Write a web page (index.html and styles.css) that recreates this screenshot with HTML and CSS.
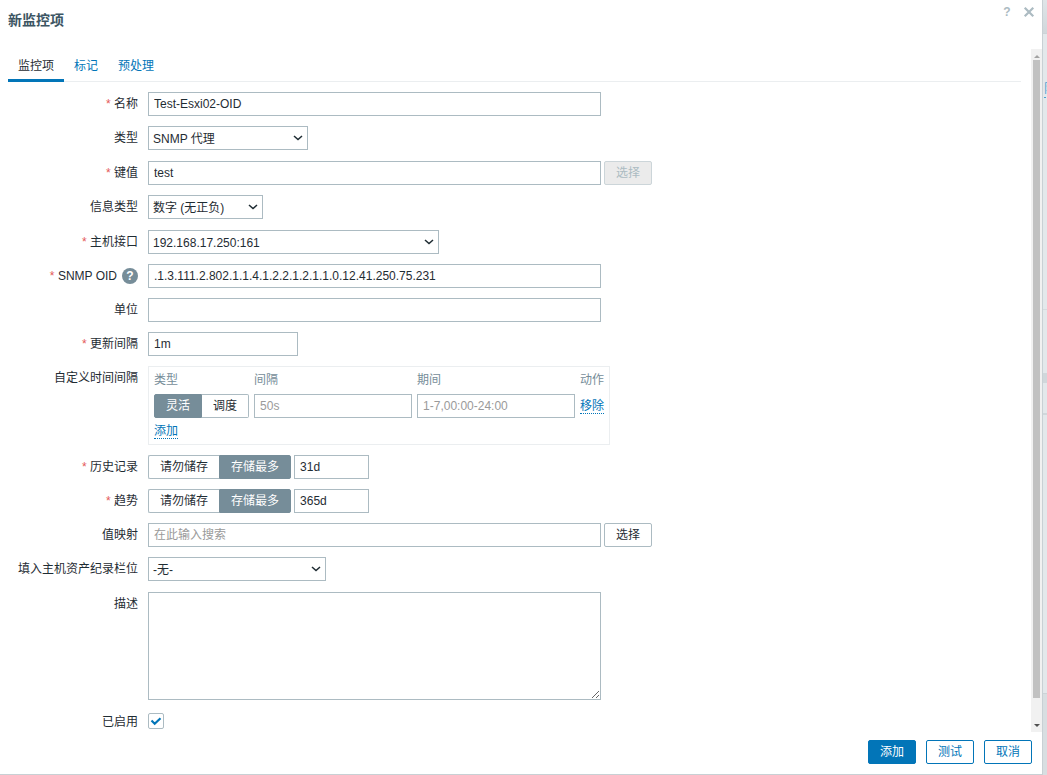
FILE: index.html
```html
<!DOCTYPE html>
<html lang="zh-CN">
<head>
<meta charset="utf-8">
<title>新监控项</title>
<link rel="stylesheet" href="styles.css">
</head>
<body>
<div class="page">
  <main class="dialog" role="dialog" aria-labelledby="dialog-title">
    <header class="dialog-header">
      <h1 class="dialog-title" id="dialog-title">新监控项</h1>
      <div class="dialog-tools">
        <button class="tool" type="button" aria-label="帮助">?</button>
        <button class="tool" type="button" aria-label="关闭"><svg width="12" height="12" viewBox="0 0 12 12"><path d="M2.5 2.5l7 7M9.5 2.5l-7 7" stroke="currentColor" stroke-width="2.2" stroke-linecap="square"/></svg></button>
      </div>
    </header>

    <div class="dialog-body">
      <div class="content">
        <nav class="tabs">
          <button class="tab tab-active" type="button">监控项</button>
          <button class="tab" type="button">标记</button>
          <button class="tab" type="button">预处理</button>
        </nav>
        <form class="form" id="item-form">
          <label class="label required" for="name">名称</label>
          <div class="field"><input class="input wide" id="name" type="text" value="Test-Esxi02-OID"></div>

          <label class="label" for="type">类型</label>
          <div class="field field-tall"><span class="select select-type"><select id="type"><option>SNMP 代理</option></select><svg class="chevron" viewBox="0 0 10 6"><path d="M1 1l4 3.6L9 1"/></svg></span></div>

          <label class="label required" for="key">键值</label>
          <div class="field"><input class="input wide" id="key" type="text" value="test"><button class="button button-plain" type="button" disabled>选择</button></div>

          <label class="label" for="value-type">信息类型</label>
          <div class="field field-tall"><span class="select select-value"><select id="value-type"><option>数字 (无正负)</option></select><svg class="chevron" viewBox="0 0 10 6"><path d="M1 1l4 3.6L9 1"/></svg></span></div>

          <label class="label required" for="interface">主机接口</label>
          <div class="field"><span class="select select-interface"><select id="interface"><option>192.168.17.250:161</option></select><svg class="chevron" viewBox="0 0 10 6"><path d="M1 1l4 3.6L9 1"/></svg></span></div>

          <div class="label label-help"><label class="required" for="oid">SNMP OID</label><button class="help" type="button">?</button></div>
          <div class="field"><input class="input wide" id="oid" type="text" value=".1.3.111.2.802.1.1.4.1.2.2.1.2.1.1.0.12.41.250.75.231"></div>

          <label class="label" for="units">单位</label>
          <div class="field"><input class="input wide" id="units" type="text"></div>

          <label class="label required" for="delay">更新间隔</label>
          <div class="field"><input class="input medium" id="delay" type="text" value="1m"></div>

          <span class="label" id="custom-label">自定义时间间隔</span>
          <div class="field">
            <div class="intervals">
              <table class="interval-table" aria-labelledby="custom-label">
                <thead><tr><th>类型</th><th>间隔</th><th>期间</th><th>动作</th></tr></thead>
                <tbody>
                  <tr>
                    <td><div class="segments"><label class="segment"><input type="radio" name="custom" checked>灵活</label><label class="segment"><input type="radio" name="custom">调度</label></div></td>
                    <td><input class="input cell" type="text" placeholder="50s" aria-label="间隔"></td>
                    <td><input class="input cell" type="text" placeholder="1-7,00:00-24:00" aria-label="期间"></td>
                    <td><a class="link" href="#">移除</a></td>
                  </tr>
                  <tr><td class="add-row" colspan="4"><a class="link" href="#">添加</a></td></tr>
                </tbody>
              </table>
            </div>
          </div>

          <label class="label required" for="history">历史记录</label>
          <div class="field"><div class="segments"><label class="segment"><input type="radio" name="history-mode">请勿储存</label><label class="segment"><input type="radio" name="history-mode" checked>存储最多</label></div><input class="input small" id="history" type="text" value="31d"></div>

          <label class="label required" for="trends">趋势</label>
          <div class="field"><div class="segments"><label class="segment"><input type="radio" name="trends-mode">请勿储存</label><label class="segment"><input type="radio" name="trends-mode" checked>存储最多</label></div><input class="input small" id="trends" type="text" value="365d"></div>

          <label class="label" for="valuemap">值映射</label>
          <div class="field"><input class="input wide" id="valuemap" type="text" placeholder="在此输入搜索"><button class="button button-plain" type="button">选择</button></div>

          <label class="label" for="inventory">填入主机资产纪录栏位</label>
          <div class="field field-tall"><span class="select select-inventory"><select id="inventory"><option>-无-</option></select><svg class="chevron" viewBox="0 0 10 6"><path d="M1 1l4 3.6L9 1"/></svg></span></div>

          <label class="label" for="description">描述</label>
          <div class="field"><textarea class="input wide description" id="description"></textarea></div>

          <label class="label" for="enabled">已启用</label>
          <div class="field field-check"><span class="check"><input id="enabled" type="checkbox" checked><svg viewBox="0 0 16 16"><path d="M3.5 7.5l3.2 3.2 5.8-5.4"/></svg></span></div>
        </form>
      </div>
      <div class="scrollbar" aria-hidden="true">
        <svg class="arrow arrow-up" viewBox="0 0 6 4"><path d="M0 4l3-3 3 3z"/></svg>
        <div class="thumb"></div>
        <svg class="arrow" viewBox="0 0 6 4"><path d="M0 0l3 3 3-3z"/></svg>
      </div>
    </div>

    <footer class="dialog-footer">
      <button class="button button-primary" type="submit" form="item-form">添加</button>
      <button class="button" type="button">测试</button>
      <button class="button" type="button">取消</button>
    </footer>
  </main>
  <aside class="backdrop">
    <div class="backdrop-top"></div>
    <div class="backdrop-filter"><a class="backdrop-link" href="#">限</a></div>
    <div class="backdrop-head"></div>
    <div class="backdrop-row"></div>
    <div class="backdrop-list"></div>
    <div class="backdrop-bottom"></div>
  </aside>
</div>
</body>
</html>
```
FILE: styles.css
```css
* { box-sizing: border-box; }

body {
  margin: 0;
  color: #1f2c33;
  background: #dfe4e7;
  font: 12px/16px "Liberation Sans", "Noto Sans CJK SC", sans-serif;
}

button, input, select, textarea { font: inherit; color: inherit; margin: 0; }
button { cursor: pointer; }

.page { display: flex; min-height: 100vh; }

.dialog {
  flex: 1;
  min-width: 0;
  display: flex;
  flex-direction: column;
  background: #fff;
  border-right: 1px solid #c8d0d4;
  border-bottom: 1px solid #c8d0d4;
}

.dialog-header {
  display: flex;
  justify-content: space-between;
  align-items: flex-start;
  height: 49px;
  padding: 4px 5px 0 8px;
}
.dialog-title { margin: 6px 0 0; font-size: 14px; line-height: 20px; font-weight: bold; color: #3c5563; }
.dialog-tools { display: flex; gap: 6px; }
.tool {
  display: flex;
  align-items: center;
  justify-content: center;
  width: 16px;
  height: 16px;
  padding: 0;
  border: 0;
  background: none;
  color: #acbbc2;
  font-weight: bold;
}

.dialog-body { flex: 1; display: flex; }
.content { flex: 1; min-width: 0; padding: 0 10px 0 8px; }

.tabs { display: flex; height: 33px; border-bottom: 1px solid #ebeef0; }
.tab {
  height: 33px;
  padding: 3px 10px 0;
  border: 0;
  border-bottom: 3px solid transparent;
  background: none;
  color: #0275b8;
}
.tab-active { color: #1f2c33; border-bottom-color: #0275b8; }

.form {
  display: grid;
  grid-template-columns: 130px minmax(0, 1fr);
  gap: 10px;
  padding-top: 10px;
}
.label { padding-top: 4px; text-align: right; line-height: 16px; }
.required::before { content: "* "; color: #e45959; }
.label-help { display: flex; justify-content: flex-end; gap: 5px; }
.help {
  width: 16px;
  height: 16px;
  padding: 0;
  border: 0;
  border-radius: 50%;
  background: #768d99;
  color: #fff;
  font-weight: bold;
  line-height: 16px;
}
.field { display: flex; align-items: flex-start; gap: 3px; min-height: 24px; }
.field-tall { min-height: 25px; }

.input {
  height: 24px;
  padding: 0 5px;
  border: 1px solid #acbbc2;
  border-radius: 0;
  background: #fff;
}
.input::placeholder { color: #9a9a9a; opacity: 1; }
.wide { width: 453px; }
.medium { width: 150px; }
.small { width: 75px; }
.cell { display: block; width: 158px; }
.description { height: 108px; resize: vertical; }

.select { display: grid; align-items: center; height: 24px; }
.select select {
  grid-area: 1 / 1;
  width: 100%;
  height: 24px;
  padding: 1px 20px 0 4px;
  border: 1px solid #acbbc2;
  border-radius: 0;
  background: #fff;
  appearance: none;
}
.chevron {
  grid-area: 1 / 1;
  justify-self: end;
  width: 10px;
  height: 6px;
  margin-right: 5px;
  fill: none;
  stroke: #1f2c33;
  stroke-width: 1.5;
  pointer-events: none;
}
.select-type { width: 160px; }
.select-value { width: 115px; }
.select-interface { width: 291px; }
.select-inventory { width: 178px; }

.button {
  min-width: 48px;
  height: 24px;
  padding: 0 11px;
  border: 1px solid #0275b8;
  border-radius: 2px;
  background: #fff;
  color: #0275b8;
  line-height: 22px;
}
.button-plain { border-color: #acbbc2; color: #1f2c33; }
.button:disabled { border-color: #ccd5d9; background: #ebebeb; color: #acbbc2; }
.button-primary { background: #0275b8; color: #fff; }

.segments { display: flex; height: 24px; }
.segment {
  padding: 0 11px;
  border: 1px solid #acbbc2;
  line-height: 22px;
  white-space: nowrap;
}
.segment:first-child { border-right-width: 0; border-radius: 2px 0 0 2px; }
.segment:last-child { border-left-width: 0; border-radius: 0 2px 2px 0; }
.segment:has(:checked) { border: 1px solid #768d99; background: #768d99; color: #fff; }
.segment input { position: absolute; width: 1px; height: 1px; opacity: 0; }

.intervals { border: 1px solid #ebeef0; padding: 0 0 0 5px; }
.interval-table { border-collapse: collapse; }
.interval-table th { height: 27px; padding: 0 5px 2px 0; font-weight: normal; text-align: left; color: #768d99; }
.interval-table td { height: 24px; padding: 0 5px 0 0; }
.interval-table .add-row { height: 26px; }
.link { display: inline-block; line-height: 14px; color: #0275b8; text-decoration: none; border-bottom: 1px dotted #0275b8; }

.field-check { min-height: 20px; padding-top: 3px; }
.check { display: grid; width: 16px; height: 16px; }
.check input {
  grid-area: 1 / 1;
  width: 16px;
  height: 16px;
  border: 1px solid #acbbc2;
  border-radius: 2px;
  background: #fff;
  appearance: none;
}
.check svg { grid-area: 1 / 1; z-index: 1; fill: none; stroke: #0275b8; stroke-width: 2.2; pointer-events: none; }

.scrollbar {
  display: flex;
  flex-direction: column;
  align-items: center;
  width: 11px;
  padding: 5px 1px 4px 1px;
  background: #f1f1f1;
}
.thumb { flex: 1; width: 7px; margin: 2px 0 26px; background: #c1c1c1; }
.arrow { width: 6px; height: 4px; fill: #505050; }
.arrow-up { fill: #a3a3a3; }

.dialog-footer { display: flex; justify-content: flex-end; gap: 10px; padding: 8px 10px 10px; }

.backdrop { display: flex; flex-direction: column; width: 4px; overflow: hidden; background: #e3e8eb; }
.backdrop-top { height: 34px; border-bottom: 1px solid #ccd3d7; background: linear-gradient(#e0e5e8, #d0d7db); }
.backdrop-filter { height: 276px; padding: 48px 0 0 1px; border-bottom: 1px solid #d5dbde; }
.backdrop-link { display: block; width: 12px; line-height: 15px; color: #4a9fd0; text-decoration: none; border-bottom: 1px dotted #4a9fd0; }
.backdrop-head { height: 63px; }
.backdrop-row { height: 42px; border-top: 10px solid #d0d7db; border-bottom: 2px solid #d0d7db; }
.backdrop-list { flex: 1; }
.backdrop-bottom { height: 82px; border-top: 1px solid #ccd3d7; background: #d8dee1; }
```
